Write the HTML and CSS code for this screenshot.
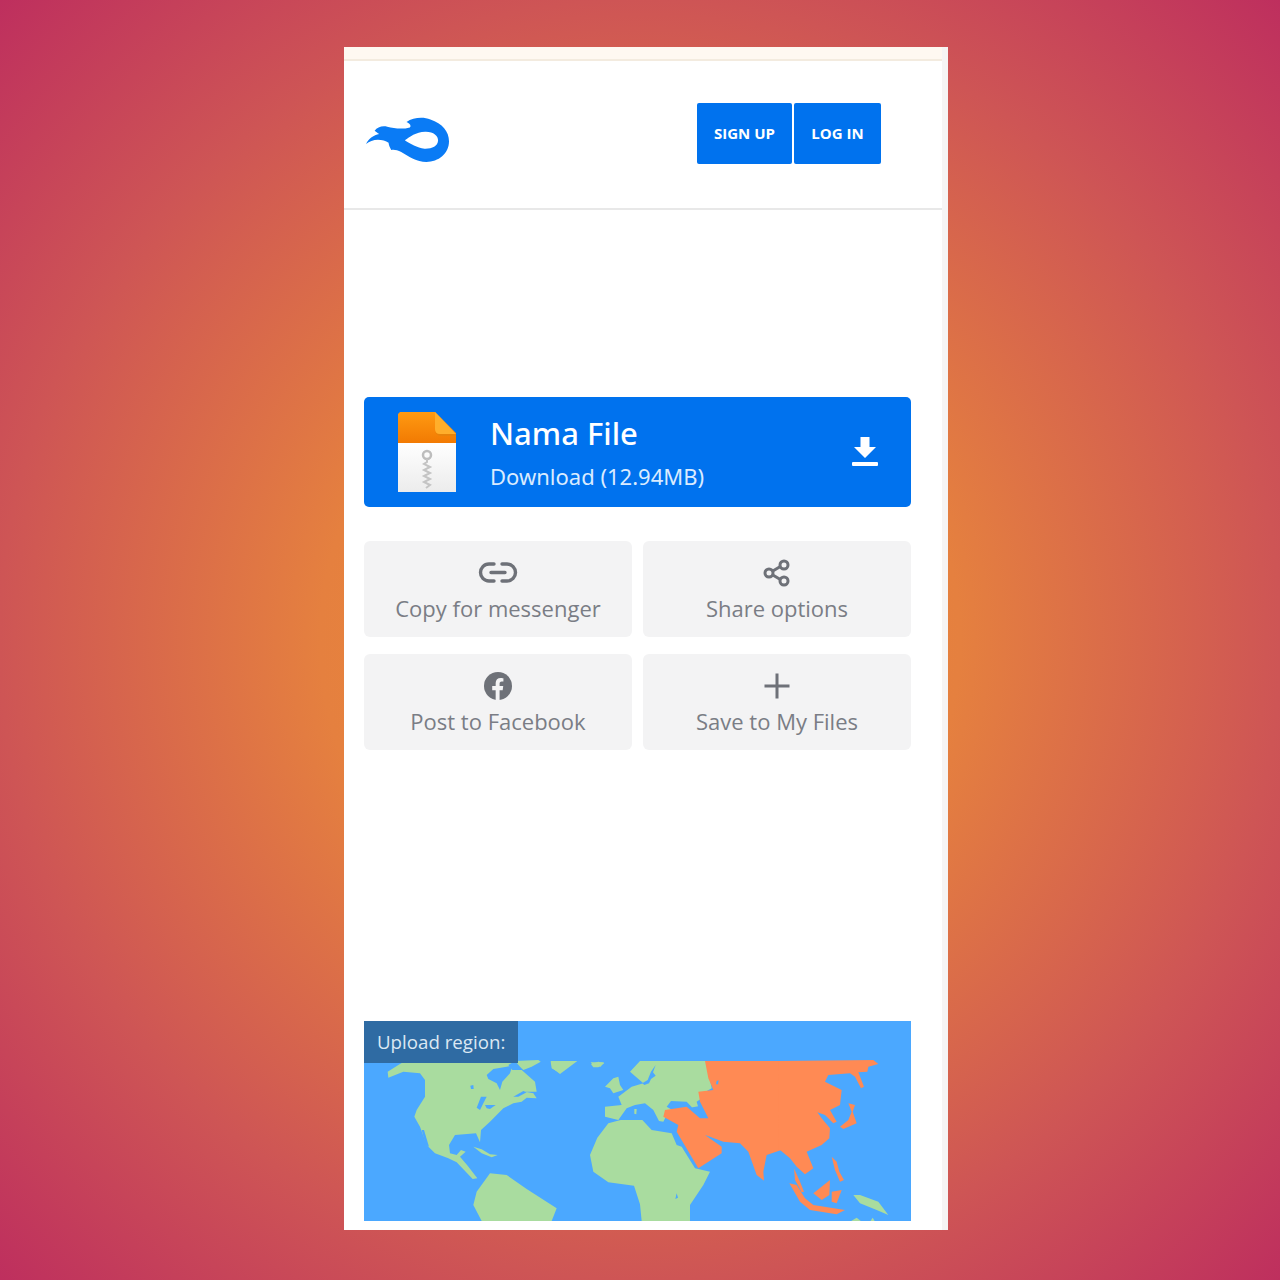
FILE: index.html
```html
<!DOCTYPE html>
<html lang="en">
<head>
    <meta charset="UTF-8">
    <meta name="viewport" content="width=device-width, initial-scale=1.0">
    <title>Nama File</title>
    <link rel="stylesheet" href="styles.css">
</head>
<body>
    <div class="phone">
        <div class="top-strip"></div>
        <div class="header">
            <svg class="logo" viewBox="18 36 250 136">
                <path fill-rule="evenodd" fill="#0a7bf5" d="M18 116C28 98 40 90 58 86C52 82 48 79 44 76C52 66 66 60 82 64C104 70 130 72 150 66C156 60 148 54 140 50C160 36 190 34 212 42C248 54 268 78 268 108C268 146 236 170 200 170C170 170 148 154 124 140C112 134 102 132 94 134C90 126 86 118 86 112C78 106 66 103 54 103C40 103 28 108 18 116ZM135 105C150 94 168 80 196 79C222 78 236 92 235 106C234 122 216 131 194 130C172 128 152 116 135 105Z"/>
            </svg>
            <div class="auth">
                <a class="auth-btn signup">SIGN UP</a>
                <a class="auth-btn login">LOG IN</a>
            </div>
        </div>
        <div class="content">
            <div class="download-card">
                <svg class="file-icon" viewBox="0 0 58 80">
                    <defs>
                        <linearGradient id="fileTop" x1="0" y1="0" x2="0" y2="1">
                            <stop offset="0" stop-color="#ff9a12"/>
                            <stop offset="1" stop-color="#f27a02"/>
                        </linearGradient>
                        <linearGradient id="fileBottom" x1="0" y1="0" x2="0" y2="1">
                            <stop offset="0" stop-color="#fff"/>
                            <stop offset="1" stop-color="#ececec"/>
                        </linearGradient>
                    </defs>
                    <path fill="url(#fileBottom)" d="M0 30H58V80H0Z"/>
                    <path fill="url(#fileTop)" d="M2 0H37L58 21V31H0V2Z"/>
                    <path fill="#e8830a" d="M37 17Q37 24 43 24H58V22H42Q37 22 37 17Z"/>
                    <path fill="#ffae2b" d="M37 0L58 22H42Q37 22 37 17Z"/>
                    <circle cx="29" cy="43" r="4" fill="none" stroke="#bdbdbd" stroke-width="2.5"/>
                    <path fill="none" stroke="#c4c4c4" stroke-width="2" d="M29 47V50L26 52L32 55L26 58L32 61L26 64L32 67L26 70L32 73L28 76"/>
                </svg>
                <div class="file-text">
                    <div class="file-name">Nama File</div>
                    <div class="file-size">Download (12.94MB)</div>
                </div>
                <svg class="download-icon" viewBox="0 0 26 30">
                    <path fill="#fff" d="M8.5 0H17.5V10H24L13 21L2 10H8.5Z"/>
                    <rect x="0" y="25" width="26" height="4" rx="1" fill="#fff"/>
                </svg>
            </div>

            <div class="tiles">
                <div class="tile">
                    <svg class="tile-icon" viewBox="0 0 40 26">
                        <path fill="none" stroke="#6e7178" stroke-width="3.4" stroke-linecap="round" d="M16 4H11C6 4 2.5 8 2.5 12.5C2.5 17 6 21 11 21H16M24 4H29C34 4 37.5 8 37.5 12.5C37.5 17 34 21 29 21H24M13 12.5H27"/>
                    </svg>
                    <span class="tile-label">Copy for messenger</span>
                </div>
                <div class="tile">
                    <svg class="tile-icon" viewBox="0 0 40 26">
                        <path fill="none" stroke="#6e7178" stroke-width="3" d="M12.5 13L25 5.5M12.5 13L25 20.5"/>
                        <circle cx="12" cy="13" r="4" fill="#f3f3f4" stroke="#6e7178" stroke-width="3"/>
                        <circle cx="27" cy="5" r="4" fill="#f3f3f4" stroke="#6e7178" stroke-width="3"/>
                        <circle cx="27" cy="21" r="4" fill="#f3f3f4" stroke="#6e7178" stroke-width="3"/>
                    </svg>
                    <span class="tile-label">Share options</span>
                </div>
                <div class="tile">
                    <svg class="tile-icon" viewBox="0 0 40 30">
                        <circle cx="20" cy="15" r="15" fill="#6e7178"/>
                        <path fill="#f3f3f4" d="M17.5 30V19.5H13.8V15H17.5V11.8C17.5 8.2 19.6 6.3 22.9 6.3C24.4 6.3 25.8 6.6 25.8 6.6V10.2H24C22.2 10.2 21.7 11.3 21.7 12.4V15H25.6L25 19.5H21.7V30Z"/>
                    </svg>
                    <span class="tile-label">Post to Facebook</span>
                </div>
                <div class="tile">
                    <svg class="tile-icon" viewBox="0 0 40 26">
                        <path fill="none" stroke="#6e7178" stroke-width="3" d="M20 0.5V25.5M7.5 13H32.5"/>
                    </svg>
                    <span class="tile-label">Save to My Files</span>
                </div>
            </div>

            <div class="region">
                <!-- coordenadas em 3x, cada grupo com a origem do seu recorte -->
                <svg class="map" viewBox="0 0 1641 600">
                    <g class="land">
                        <path d="M678 402L700 350L733 307L770 297L835 297L863 327L923 337L938 372L953 377L993 442L1038 452L1018 492L978 552L978 600H833L828 550L810 494L733 484L688 452Z"/>
                        <path d="M338 512L378 457L428 462L488 504L578 562L563 600H353L328 552Z"/>
                        <path d="M560 120H640L588 159L566 142Z"/>
                        <path d="M680 124H720L710 137L688 134Z"/>
                    </g>
                    <path class="water" d="M938 517L942 530L934 534Z"/>

                    <!-- America do Norte -->
                    <g transform="translate(33,102)">
                        <g class="land">
                            <path d="M0 88L40 68L38 50L70 30L90 18H420L400 30L412 45L440 45L480 80L485 110L450 110L475 115L485 130L455 128L440 140L415 145L385 160L345 200L318 225L315 262L303 235L240 240L222 270L225 295L245 300L258 285L272 290L255 305L278 332L307 370L293 372L245 322L220 310L180 295L155 270L135 215L118 185L125 165L150 125L150 75L135 55L85 50L40 68Z"/>
                            <path d="M420 18L490 15L497 20L470 35L445 45L435 35Z"/>
                            <path d="M295 275L320 283L345 298L368 300L350 307L320 295Z"/>
                            <path d="M527 20L550 20L555 55L530 40Z"/>
                        </g>
                        <g class="water">
                            <path d="M335 60L355 42L395 35L412 32L405 55L382 80L375 105L365 85L340 72Z"/>
                            <path d="M305 158L318 125L335 125L325 145L315 165Z"/>
                            <path d="M330 150L362 150L345 162L335 160Z"/>
                            <path d="M286 92L295 90L296 102L288 102Z"/>
                            <path d="M415 125L445 108L455 112L430 125Z"/>
                            <path d="M140 225L147 225L162 275L152 270Z"/>
                        </g>
                    </g>

                    <!-- Europa -->
                    <g transform="translate(663,102)">
                        <g class="land">
                            <path d="M135 50L165 18H365L380 100L345 120L360 150L250 170L235 200L222 198L205 165L180 145L150 150L125 160L100 195L60 185L60 155L110 150L100 125L140 95L175 85Z"/>
                            <path d="M18 28L40 20L58 25L40 37L25 37Z"/>
                            <path d="M60 95L85 70L100 65L105 90L115 105L85 115L75 100Z"/>
                            <path d="M148 162L155 162L154 178L148 176Z"/>
                        </g>
                        <g class="water">
                            <path d="M172 85L188 75L198 50L212 30L204 52L212 62L198 72L192 85L178 90Z"/>
                            <path d="M245 155L258 138L305 140L322 158L300 165L262 165Z"/>
                            <path d="M335 140L350 130L372 160L372 192L345 175Z"/>
                        </g>
                    </g>

                    <!-- Asia oeste, no recorte da direita -->
                    <g class="asia" transform="translate(828,-18)">
                        <path d="M195 138L424 138V405L380 420L370 470L372 497L350 480L325 410L300 385L250 380L210 365L195 360L245 395L245 415L175 460L110 350L115 330L70 305L75 285L140 275L180 310L205 310L180 260L175 230L220 225L205 190Z"/>
                    </g>
                    <path class="water" d="M1058 180L1064 178L1062 190L1056 190Z"/>

                    <!-- Asia leste e ilhas -->
                    <g transform="translate(1248,102)">
                        <g class="asia">
                            <path d="M-4 18L280 15L295 27L265 35L262 50L235 52L252 95L243 100L225 65L210 55L145 60L135 80L150 88L185 105L180 150L150 165L170 200L160 205L135 180L112 172L125 190L150 220L148 250L125 270L80 290L100 340L75 358L50 335L30 310L0 285H-4Z"/>
                            <path d="M205 145L225 150L218 170L230 205L190 222L180 215L205 195L215 170Z"/>
                            <path d="M155 305L170 320L178 350L192 375L180 380L165 345Z"/>
                            <path d="M150 375L148 420L125 435L100 415Z"/>
                            <path d="M155 410L185 405L170 445L155 440Z"/>
                            <path d="M28 385L50 390L75 430L100 450L195 465L170 478L90 465L60 440Z"/>
                            <path d="M42 340L60 380L72 410L65 412L45 375Z"/>
                        </g>
                        <g class="land">
                            <path d="M220 420L240 420L295 440L325 480L290 465L240 445Z"/>
                            <path d="M210 500L230 488L245 500Z"/>
                            <path d="M270 500L278 488L285 500Z"/>
                        </g>
                    </g>
                </svg>
                <div class="region-label">Upload region:</div>
            </div>
        </div>
    </div>
</body>
</html>
```

FILE: styles.css
```css
body {
    margin: 0;
    height: 1280px;
    padding-top: 47px;
    box-sizing: border-box;
    overflow: hidden;
    background: radial-gradient(circle at 640px 640px, #ee8a34 0, #e5803f 320px, #ce5555 640px, #be2f5e 905px);
    font-family: "Open Sans", Arial, sans-serif;
}
.phone {
    box-sizing: border-box;
    width: 604px;
    height: 1183px;
    margin-left: 344px;
    background-color: #fff;
    border-right: 6px solid #f6f4f4;
}
.top-strip {
    height: 12px;
    background-color: #fef8f1;
    border-bottom: 2px solid #f3ebdf;
}
.header {
    display: flex;
    justify-content: space-between;
    align-items: flex-start;
    box-sizing: border-box;
    height: 149px;
    padding: 42px 61px 0 22px;
    border-bottom: 2px solid #e8e8e8;
}
.logo {
    width: 83px;
    height: 46px;
    margin-top: 14px;
}
.auth {
    display: flex;
    gap: 2px;
}
.auth-btn {
    display: flex;
    align-items: center;
    justify-content: center;
    height: 61px;
    padding-bottom: 2px;
    box-sizing: border-box;
    background-color: #0072ee;
    color: #fff;
    font-size: 15px;
    font-weight: 700;
    border-radius: 2px;
}
.signup {
    width: 95px;
}
.login {
    width: 87px;
}
.content {
    padding: 187px 31px 0 20px;
}
.download-card {
    display: flex;
    align-items: center;
    height: 110px;
    padding: 0 33px 0 34px;
    box-sizing: border-box;
    background-color: #0072ee;
    border-radius: 5px;
    color: #fff;
}
.file-icon {
    width: 58px;
    height: 80px;
}
.file-text {
    flex: 1;
    margin-left: 34px;
}
.file-name {
    font-family: "Noto Sans", "Open Sans", sans-serif;
    font-size: 31px;
    font-weight: 500;
    line-height: 40px;
}
.file-size {
    font-family: "Noto Sans", "Open Sans", sans-serif;
    font-size: 22px;
    line-height: 30px;
    margin-top: 8px;
    color: #d9ebff;
}
.download-icon {
    width: 26px;
    height: 30px;
}
.tiles {
    display: grid;
    grid-template-columns: 268px 268px;
    grid-auto-rows: 96px;
    gap: 17px 11px;
    margin-top: 34px;
}
.tile {
    display: flex;
    flex-direction: column;
    align-items: center;
    padding-top: 18px;
    box-sizing: border-box;
    background-color: #f3f3f4;
    border-radius: 6px;
}
.tile-icon {
    width: 40px;
    height: 28px;
}
.tile-label {
    margin-top: 6px;
    font-size: 22px;
    line-height: 30px;
    color: #7a7d85;
}
.region {
    position: relative;
    height: 200px;
    margin-top: 271px;
    background-color: #4ba8ff;
}
.map {
    display: block;
    width: 547px;
    height: 200px;
}
.land {
    fill: #a9dc9f;
}
.water {
    fill: #4ba8ff;
}
.asia {
    fill: #ff8a54;
}
.region-label {
    position: absolute;
    top: 0;
    left: 0;
    width: 154px;
    height: 42px;
    box-sizing: border-box;
    padding-left: 13px;
    background-color: #2f6ba3;
    color: #dce8f3;
    font-size: 18.7px;
    line-height: 42px;
}
```
